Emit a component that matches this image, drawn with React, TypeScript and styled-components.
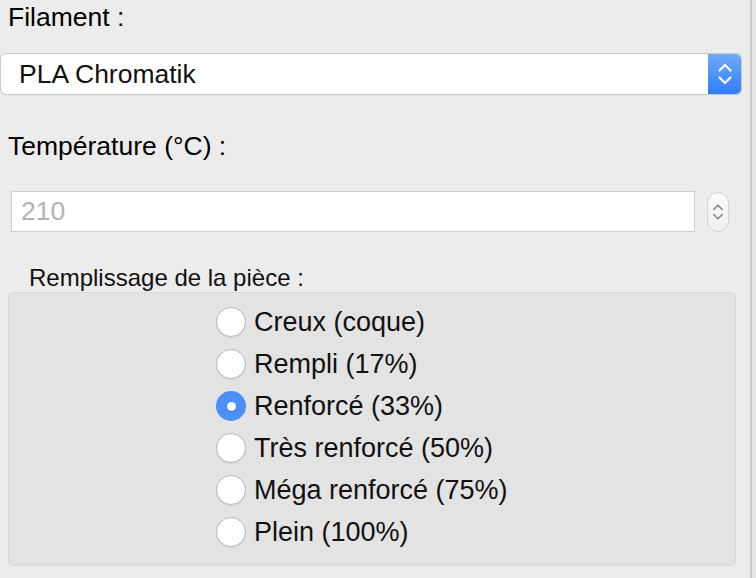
import React from "react";
import styled, { createGlobalStyle } from "styled-components";

const GlobalStyle = createGlobalStyle`
  html, body {
    margin: 0;
    padding: 0;
    background: #ececec;
  }
  body {
    font-family: "Liberation Sans", Arial, sans-serif;
    color: #000;
  }
`;

interface IRadioProps {
  checked: boolean;
}

const fillOptions = [
  "Creux (coque)",
  "Rempli (17%)",
  "Renforcé (33%)",
  "Très renforcé (50%)",
  "Méga renforcé (75%)",
  "Plein (100%)"
];

const Chevrons = ({
  color,
  width,
  height
}: {
  color: string;
  width: number;
  height: number;
}) => (
  <svg width={width} height={height} viewBox="0 0 16 24" fill="none">
    <path
      d="M2.5 8.5 L8 3 L13.5 8.5"
      stroke={color}
      strokeWidth="2.2"
      strokeLinecap="round"
      strokeLinejoin="round"
    />
    <path
      d="M2.5 15.5 L8 21 L13.5 15.5"
      stroke={color}
      strokeWidth="2.2"
      strokeLinecap="round"
      strokeLinejoin="round"
    />
  </svg>
);

const App: React.FC = () => {
  const selected = 2;
  return (
    <>
      <GlobalStyle />
      <Window>
        <Panel>
          <FieldLabel>Filament :</FieldLabel>
          <Select>
            <SelectValue>PLA Chromatik</SelectValue>
            <SelectButton>
              <Chevrons color="#ffffff" width={16} height={24} />
            </SelectButton>
          </Select>
          <FieldLabel $top={37}>Température (°C) :</FieldLabel>
          <InputRow>
            <NumberInput>210</NumberInput>
            <Stepper>
              <Chevrons color="#8c8c8c" width={12} height={20} />
            </Stepper>
          </InputRow>
          <GroupTitle>Remplissage de la pièce :</GroupTitle>
          <GroupBox>
            <RadioList>
              {fillOptions.map((label, i) => (
                <RadioRow key={label}>
                  <Radio checked={i === selected} />
                  <RadioLabel>{label}</RadioLabel>
                </RadioRow>
              ))}
            </RadioList>
          </GroupBox>
        </Panel>
        <Edge />
      </Window>
    </>
  );
};

const Window = styled.div({
  display: "flex",
  width: "756px",
  height: "578px",
  overflow: "hidden"
});

const Panel = styled.div({
  display: "flex",
  flexDirection: "column",
  width: "752px",
  paddingTop: "2px",
  borderRight: "2px solid #cbcbcb",
  boxSizing: "border-box"
});

const Edge = styled.div({
  flex: 1,
  background: "#e6e6e6"
});

const FieldLabel = styled.div<{ $top?: number }>(props => ({
  marginTop: `${props.$top || 0}px`,
  marginLeft: "8px",
  fontSize: "26.5px",
  lineHeight: "30px",
  color: "#000"
}));

const Select = styled.div({
  display: "flex",
  marginTop: "22px",
  marginLeft: "1px",
  width: "740px",
  height: "40px",
  boxSizing: "border-box",
  background: "#fff",
  borderRadius: "5px",
  boxShadow: "0 0 0 1px #c9c9c9, 0 1px 1px rgba(0,0,0,0.12)",
  overflow: "hidden"
});

const SelectValue = styled.div({
  flex: 1,
  display: "flex",
  alignItems: "center",
  paddingLeft: "18px",
  fontSize: "26.5px",
  color: "#111"
});

const SelectButton = styled.div({
  width: "33px",
  display: "flex",
  alignItems: "center",
  justifyContent: "center",
  background: "linear-gradient(#70aaf9, #2f7df6)"
});

const InputRow = styled.div({
  display: "flex",
  alignItems: "center",
  gap: "12px",
  marginTop: "30px",
  marginLeft: "11px"
});

const NumberInput = styled.div({
  width: "684px",
  height: "41px",
  boxSizing: "border-box",
  border: "1px solid #cdcdcd",
  background: "#fff",
  display: "flex",
  alignItems: "center",
  paddingLeft: "9px",
  fontSize: "26.5px",
  color: "#b3b3b3"
});

const Stepper = styled.div({
  width: "22px",
  height: "40px",
  boxSizing: "border-box",
  borderRadius: "11px",
  border: "1px solid #d3d3d3",
  background: "linear-gradient(#fafafa, #f0f0f0)",
  display: "flex",
  alignItems: "center",
  justifyContent: "center"
});

const GroupTitle = styled.div({
  marginTop: "33px",
  marginLeft: "29px",
  fontSize: "24px",
  lineHeight: "26px",
  color: "#111"
});

const GroupBox = styled.div({
  marginTop: "1px",
  marginLeft: "8px",
  width: "728px",
  height: "274px",
  boxSizing: "border-box",
  background: "#e3e3e3",
  border: "1px solid #d9d9d9",
  borderRadius: "6px",
  paddingTop: "14px",
  paddingLeft: "207px"
});

const RadioList = styled.div({
  display: "flex",
  flexDirection: "column",
  gap: "12px"
});

const RadioRow = styled.div({
  display: "flex",
  alignItems: "center",
  gap: "8px",
  height: "30px"
});

const Radio = styled.div<IRadioProps>(props => ({
  width: "30px",
  height: "30px",
  flexShrink: 0,
  boxSizing: "border-box",
  borderRadius: "50%",
  display: "flex",
  alignItems: "center",
  justifyContent: "center",
  background: props.checked ? "#4c90f7" : "#fff",
  border: props.checked ? "none" : "1px solid #b8b8b8",
  boxShadow: props.checked ? "none" : "0 1px 1px rgba(0,0,0,0.08)",
  "&::after": {
    content: '""',
    display: props.checked ? "block" : "none",
    width: "9px",
    height: "9px",
    borderRadius: "50%",
    background: "#fff",
    boxShadow: "0 1px 1px rgba(0,0,0,0.3)"
  }
}));

const RadioLabel = styled.span({
  fontSize: "27px",
  color: "#111"
});

export default App;
